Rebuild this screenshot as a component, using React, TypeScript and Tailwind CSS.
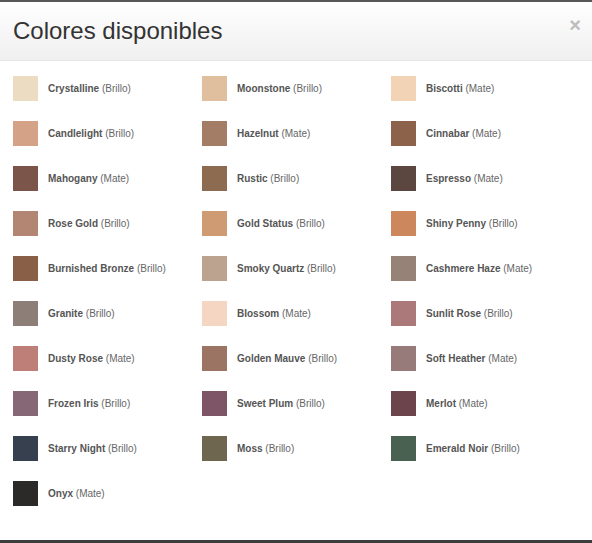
const colors = [
  { name: "Crystalline", finish: "Brillo", hex: "#ebdcc2" },
  { name: "Moonstone", finish: "Brillo", hex: "#dfbf9e" },
  { name: "Biscotti", finish: "Mate", hex: "#f3d3b6" },
  { name: "Candlelight", finish: "Brillo", hex: "#d4a287" },
  { name: "Hazelnut", finish: "Mate", hex: "#a37d66" },
  { name: "Cinnabar", finish: "Mate", hex: "#8d624a" },
  { name: "Mahogany", finish: "Mate", hex: "#7b5549" },
  { name: "Rustic", finish: "Brillo", hex: "#8c6b50" },
  { name: "Espresso", finish: "Mate", hex: "#5b4740" },
  { name: "Rose Gold", finish: "Brillo", hex: "#b38573" },
  { name: "Gold Status", finish: "Brillo", hex: "#cf9b72" },
  { name: "Shiny Penny", finish: "Brillo", hex: "#cc875c" },
  { name: "Burnished Bronze", finish: "Brillo", hex: "#8a5f48" },
  { name: "Smoky Quartz", finish: "Brillo", hex: "#bba390" },
  { name: "Cashmere Haze", finish: "Mate", hex: "#968277" },
  { name: "Granite", finish: "Brillo", hex: "#8e7e78" },
  { name: "Blossom", finish: "Mate", hex: "#f5d6c3" },
  { name: "Sunlit Rose", finish: "Brillo", hex: "#ab797a" },
  { name: "Dusty Rose", finish: "Mate", hex: "#bf7f79" },
  { name: "Golden Mauve", finish: "Brillo", hex: "#9c7463" },
  { name: "Soft Heather", finish: "Mate", hex: "#977a7a" },
  { name: "Frozen Iris", finish: "Brillo", hex: "#866776" },
  { name: "Sweet Plum", finish: "Brillo", hex: "#7d5566" },
  { name: "Merlot", finish: "Mate", hex: "#6b454b" },
  { name: "Starry Night", finish: "Brillo", hex: "#36404f" },
  { name: "Moss", finish: "Brillo", hex: "#6f6650" },
  { name: "Emerald Noir", finish: "Brillo", hex: "#496150" },
  { name: "Onyx", finish: "Mate", hex: "#2b2a28" },
];

export default function App() {
  return (
    <div className="w-[592px] h-[543px] flex flex-col bg-white font-['Liberation_Sans',Arial,sans-serif] border-t-2 border-[#585858]">
      {/* Header */}
      <div className="h-[59px] flex items-center justify-between pl-[13px] pr-[11px] border-b border-[#e5e5e5] bg-gradient-to-b from-white to-[#efefef]">
        <h2 className="text-[24px] leading-none text-[#333] pb-[1px]">Colores disponibles</h2>
        <button className="text-[#bdbdbd] text-[20px] font-bold leading-none -mt-[12px]">×</button>
      </div>

      {/* Content */}
      <div className="flex-1 pt-[15px] pl-[13px]">
        <div className="grid grid-cols-[189px_189px_189px] gap-y-[20px]">
          {colors.map((c) => (
            <div key={c.name} className="flex items-center gap-[10px] h-[25px]">
              <div className="w-[25px] h-[25px] shrink-0" style={{ backgroundColor: c.hex }} />
              <span className="text-[10px] text-[#666] whitespace-nowrap">
                <span className="font-bold text-[#555]">{c.name}</span> ({c.finish})
              </span>
            </div>
          ))}
        </div>
      </div>

      {/* Page behind */}
      <div className="h-[3px] bg-[#3c3c3c]" />
    </div>
  );
}
